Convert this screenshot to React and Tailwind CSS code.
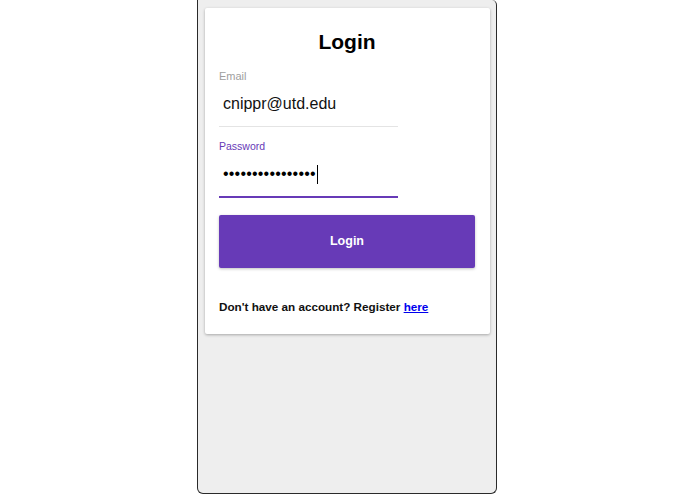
export default function App() {
  return (
    <div className="w-full h-[494px] bg-white flex overflow-hidden pl-[197px]" style={{ fontFamily: '"Liberation Sans", Arial, sans-serif' }}>
      <div className="w-[300px] h-[494px] bg-[#eeeeee] border-x border-b border-[#2a2a2a] rounded-tr-[5px] rounded-b-[6px] pt-[8px] pl-[7px]">
        <div className="w-[285px] bg-white rounded-[2px] shadow-[0_1px_3px_rgba(0,0,0,0.3)] pt-[20px] pb-[19px] pl-[14px] pr-[15px]">
          <h1 className="text-center text-[21px] leading-[28px] font-bold text-black">Login</h1>
          <div className="mt-[14px] w-[179px]">
            <div className="text-[11px] leading-[13px] text-[#9e9e9e]">Email</div>
            <div className="mt-[10px] pl-[4px] text-[16px] leading-[21px] text-[#111]">cnippr@utd.edu</div>
            <div className="mt-[12px] h-px bg-[#e4e4e4]"></div>
          </div>
          <div className="mt-[13px] w-[179px]">
            <div className="text-[10.5px] leading-[13px] text-[#673ab7]">Password</div>
            <div className="mt-[11px] pl-[4px] h-[20px] flex items-center text-[16px] leading-[20px] text-black">
              <span className="tracking-[0.2px]">••••••••••••••••</span>
              <span className="inline-block w-px h-[19px] bg-black ml-[1px]"></span>
            </div>
            <div className="mt-[12px] h-[2px] bg-[#673ab7]"></div>
          </div>
          <button className="mt-[17px] w-full h-[53px] bg-[#673ab7] rounded-[2px] shadow-[0_1px_3px_rgba(0,0,0,0.25)] text-white font-bold text-[12.5px]">Login</button>
          <div className="mt-[31px] text-[11.7px] leading-[16px] font-bold text-[#111]">
            Don't have an account? Register <a href="#" className="text-[#0000ee] underline">here</a>
          </div>
        </div>
      </div>
    </div>
  );
}
